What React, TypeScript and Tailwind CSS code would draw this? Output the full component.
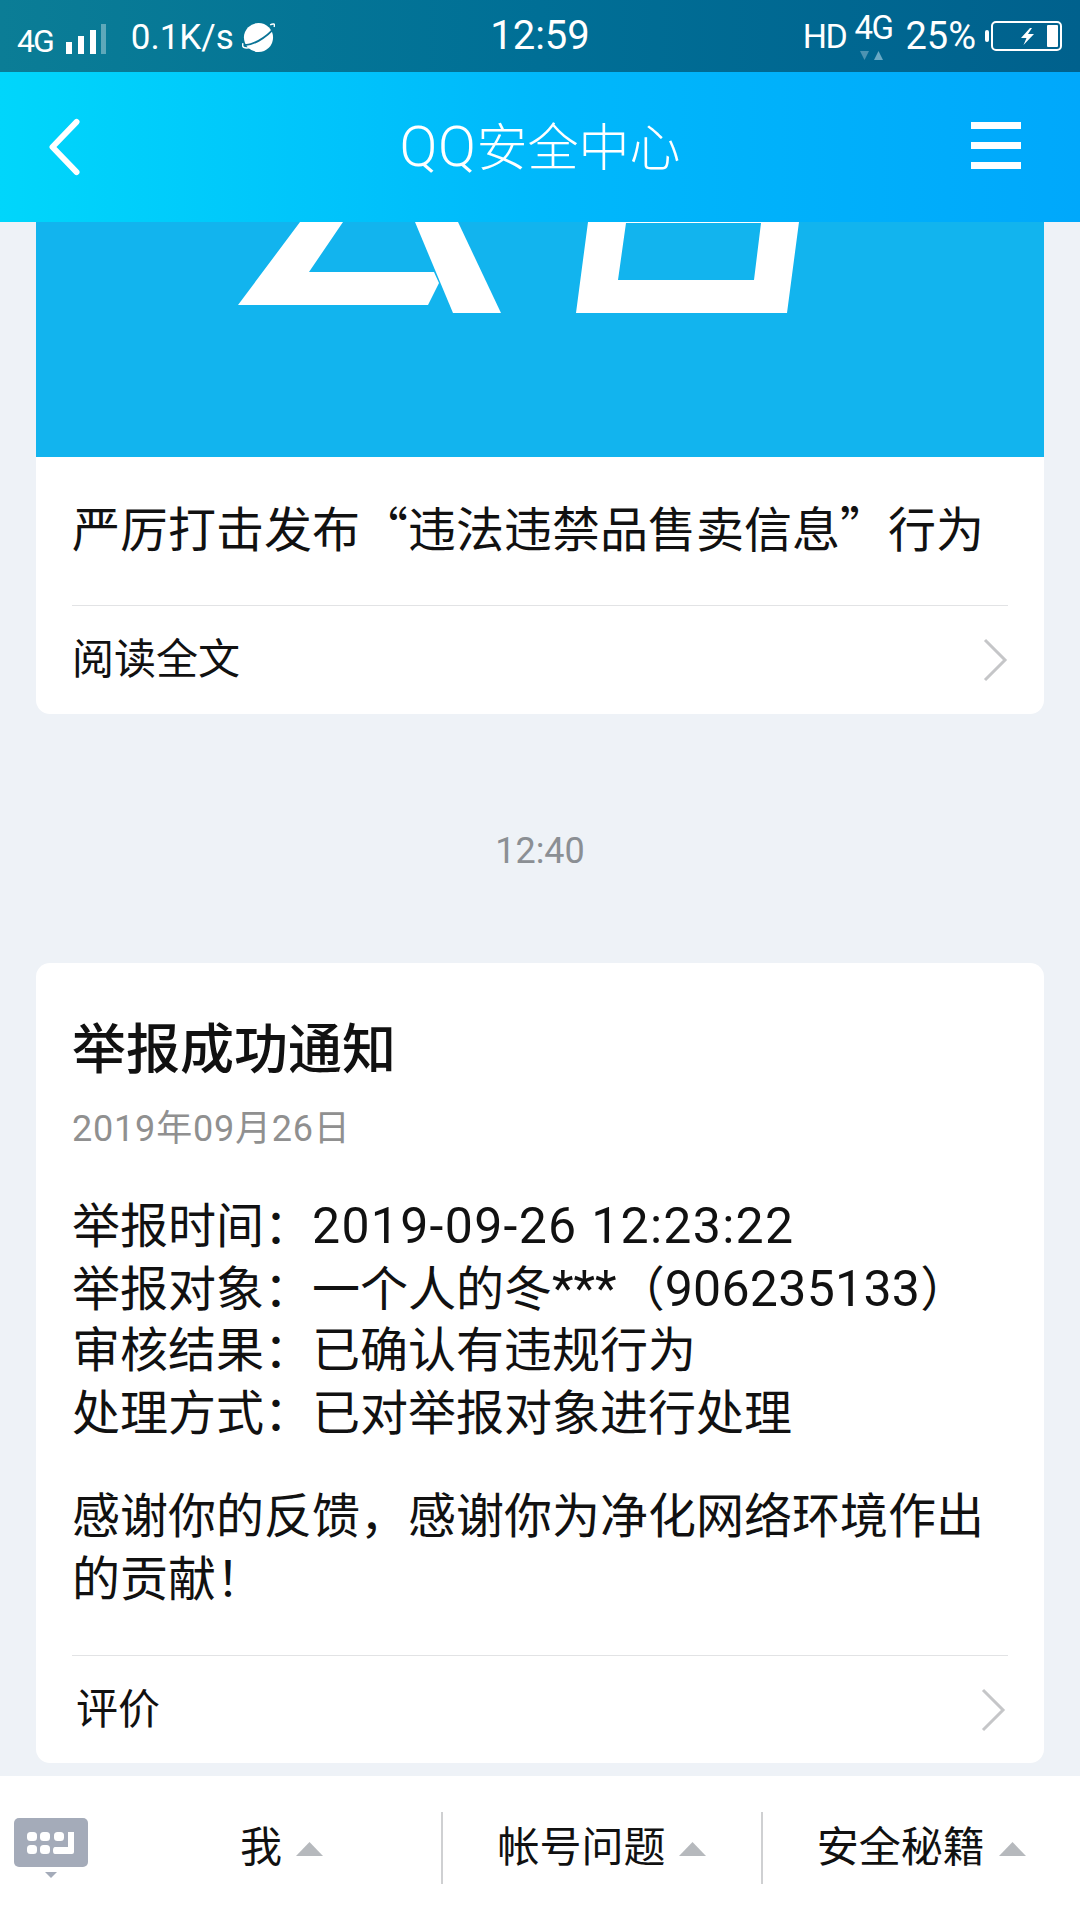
import React from 'react';

const FONT = "font-['Roboto','Noto_Sans_CJK_SC',sans-serif]";

const SignalBars = () => (
  <svg width="42" height="32" viewBox="0 0 42 32" className="ml-[13px] mt-[5px]">
    <rect x="0" y="19" width="6" height="12" fill="#fff" />
    <rect x="12" y="13" width="6" height="18" fill="#fff" />
    <rect x="24" y="7" width="6" height="24" fill="#fff" />
    <rect x="35" y="1" width="5" height="30" fill="#fff" opacity="0.35" />
  </svg>
);

const Planet = () => (
  <svg width="33" height="33" viewBox="0 0 34 34" className="ml-[8px] mt-[2px]">
    <circle cx="17" cy="17" r="15" fill="#fff" />
    <path d="M1 24 C8 27 26 17 33 7" fill="none" stroke="#0a7396" strokeWidth="2" />
    <path d="M1 23 C-1 29 6 28 9 27 M33 6 C35 2 31 3 29 4" fill="none" stroke="#fff" strokeWidth="1.6" />
  </svg>
);

const NetBadge = () => (
  <div className="relative ml-[8px] h-[50px] w-[38px]">
    <span className="absolute left-0 top-[-5px] text-[33px] leading-[44px] tracking-[-1.500px] text-white">4G</span>
    <svg width="26" height="10" viewBox="0 0 26 10" className="absolute left-[6px] top-[40px]">
      <path d="M0 0 L9 0 L4.500 9 Z" fill="#4c93b2" />
      <path d="M14 9 L23 9 L18.500 0 Z" fill="#6aa9c4" />
    </svg>
  </div>
);

const Battery = () => (
  <svg width="78" height="32" viewBox="0 0 78 32" className="ml-[9px]">
    <rect x="0" y="10" width="4" height="12" rx="2" fill="#fff" />
    <rect x="7" y="2" width="69" height="28" rx="4" fill="none" stroke="#fff" strokeWidth="2" />
    <rect x="62" y="5" width="11" height="22" rx="1" fill="#fff" />
    <path d="M45 8 L36 18 L41.500 18 L38.500 25 L49 14 L43 14 L47 8 Z" fill="#fff" />
  </svg>
);

const Keyboard = () => (
  <svg width="74" height="62" viewBox="0 0 74 62">
    <rect x="0" y="0" width="74" height="49" rx="5" fill="#a4abb9" />
    <g fill="#fff">
      <rect x="13" y="14" width="10" height="9" rx="3.500" />
      <rect x="26" y="14" width="10" height="9" rx="3.500" />
      <rect x="40" y="14" width="10" height="9" rx="3.500" />
      <rect x="13" y="27" width="10" height="9" rx="3.500" />
      <rect x="26" y="27" width="10" height="9" rx="3.500" />
      <path d="M41 29 H54 V14 H60 V34 Q60 36 58 36 H41 Q39 36 39 32.500 Q39 29 41 29 Z" />
    </g>
    <path d="M31 54 L43 54 L37 60 Z" fill="#a4abb9" />
  </svg>
);

const BannerMark = () => (
  <svg viewBox="36 222 1008 235" className="block h-[235px] w-full">
    <path fill="#fff" d="M300 222 L343 222 L309 272 L434 272 L439 283 L428 305 L238 305 Z" />
    <path fill="#fff" d="M415 222 L458 222 L501 313 L453 313 Z" />
    <path fill="#fff" fillRule="evenodd" d="M588 222 L799 222 L787 313 L576 313 Z M626 223 L618 280 L754 280 L761 223 Z" />
  </svg>
);

const RowChevron = () => (
  <svg width="26" height="46" viewBox="0 0 26 46">
    <path d="M3 3 L23 23 L3 43" fill="none" stroke="#c5c6c8" strokeWidth="3" />
  </svg>
);

const MenuItem = ({ label, divider }: { label: string; divider?: boolean }) => (
  <div className={`flex h-[72px] w-[320px] items-center justify-center gap-[14px] ${divider ? 'border-l-2 border-[#cfd0d2]' : ''}`}>
    <span className="text-[42px] leading-none text-[#111]">{label}</span>
    <svg width="27" height="14" viewBox="0 0 27 14" className="mt-[2px]">
      <path d="M0 14 L13.500 0 L27 14 Z" fill="#b6b9bd" />
    </svg>
  </div>
);

const App: React.FC = () => {
  return (
    <div className={`${FONT} flex h-[1920px] w-[1080px] flex-col overflow-hidden bg-[#eef2f7]`}>
      {/* status bar */}
      <div className="flex h-[72px] shrink-0 items-center justify-between bg-gradient-to-r from-[#0b7d96] via-[#006f96] to-[#00618d] px-[17px] text-white">
        <div className="flex w-[400px] items-center">
          <span className="mt-[10px] text-[32px] leading-none tracking-[-2px]">4G</span>
          <SignalBars />
          <span className="ml-[23px] mt-[2px] text-[35px] leading-none">0.1K/s</span>
          <Planet />
        </div>
        <span className="text-[40px] leading-none">12:59</span>
        <div className="flex w-[400px] items-center justify-end">
          <span className="text-[34px] leading-none tracking-[-1.500px]">HD</span>
          <NetBadge />
          <span className="ml-[13px] text-[38px] leading-none">25%</span>
          <Battery />
        </div>
      </div>

      {/* header */}
      <div className="flex h-[150px] shrink-0 items-center justify-between bg-gradient-to-r from-[#00d6fb] via-[#00b8fb] to-[#00a8fb] pl-[47px] pr-[59px] text-white">
        <div className="w-[50px]">
          <svg width="36" height="58" viewBox="0 0 36 60">
            <path d="M30 4 L5 30 L30 56" fill="none" stroke="#fff" strokeWidth="6" strokeLinecap="round" strokeLinejoin="round" />
          </svg>
        </div>
        <span className="ml-[12px] font-light leading-none">
          <span className="text-[56px] tracking-[0.5px]">QQ</span>
          <span className="text-[51px]">安全中心</span>
        </span>
        <div className="mb-[4px] flex w-[50px] flex-col gap-[13px]">
          <div className="h-[7px] bg-white" />
          <div className="h-[7px] bg-white" />
          <div className="h-[7px] bg-white" />
        </div>
      </div>

      {/* messages */}
      <div className="flex flex-1 flex-col items-center overflow-hidden">
        <div className="w-[1008px] overflow-hidden rounded-b-[14px] bg-white">
          <div className="h-[235px] bg-[#12b4ee]">
            <BannerMark />
          </div>
          <div className="px-[36px]">
            <div className="flex h-[149px] items-center border-b border-[#e2e3e5] pb-[5px]">
              <span className="whitespace-nowrap text-[48px] leading-none text-[#111]">
                严厉打击发布<span className="font-['Noto_Sans_CJK_SC',sans-serif]">“</span>违法违禁品售卖信息<span className="font-['Noto_Sans_CJK_SC',sans-serif]">”</span>行为
              </span>
            </div>
            <div className="flex h-[108px] items-center justify-between">
              <span className="text-[42px] leading-none text-[#111]">阅读全文</span>
              <RowChevron />
            </div>
          </div>
        </div>

        <div className="flex h-[249px] items-center justify-center pt-[24px]">
          <span className="text-[36px] leading-none text-[#8b8f94]">12:40</span>
        </div>

        <div className="h-[800px] w-[1008px] rounded-[14px] bg-white px-[36px]">
          <div className="pt-[58px] text-[54px] font-medium leading-[60px] text-[#111]">举报成功通知</div>
          <div className="mt-[28px] text-[36px] leading-[40px] tracking-[0.8px] text-[#909090]">2019年09月26日</div>
          <div className="mt-[46px] text-[48px] text-[#111]">
            <div className="h-[62.500px] leading-[62.500px]">举报时间：<span className="text-[50px] tracking-[1.300px]">2019-09-26 12:23:22</span></div>
            <div className="h-[62.500px] leading-[62.500px]">
              举报对象：一个人的冬<span className="text-[50px]">***</span>（<span className="text-[50px] tracking-[0.3px]">906235133</span>）
            </div>
            <div className="h-[62.500px] leading-[62.500px]">审核结果：已确认有违规行为</div>
            <div className="h-[62.500px] leading-[62.500px]">处理方式：已对举报对象进行处理</div>
          </div>
          <div className="mt-[41px] text-[48px] leading-[62.500px] text-[#111]">感谢你的反馈，感谢你为净化网络环境作出的贡献！</div>
          <div className="mt-[44px] flex h-[108px] items-center justify-between border-t border-[#e2e3e5] pl-[4px] pr-[2px] pt-[1px]">
            <span className="text-[42px] leading-none text-[#111]">评价</span>
            <RowChevron />
          </div>
        </div>
      </div>

      {/* bottom menu */}
      <div className="flex h-[144px] shrink-0 items-center bg-white">
        <div className="flex h-full w-[122px] items-start pl-[14px] pt-[42px]">
          <Keyboard />
        </div>
        <MenuItem label="我" />
        <MenuItem label="帐号问题" divider />
        <MenuItem label="安全秘籍" divider />
      </div>
    </div>
  );
};

export default App;
